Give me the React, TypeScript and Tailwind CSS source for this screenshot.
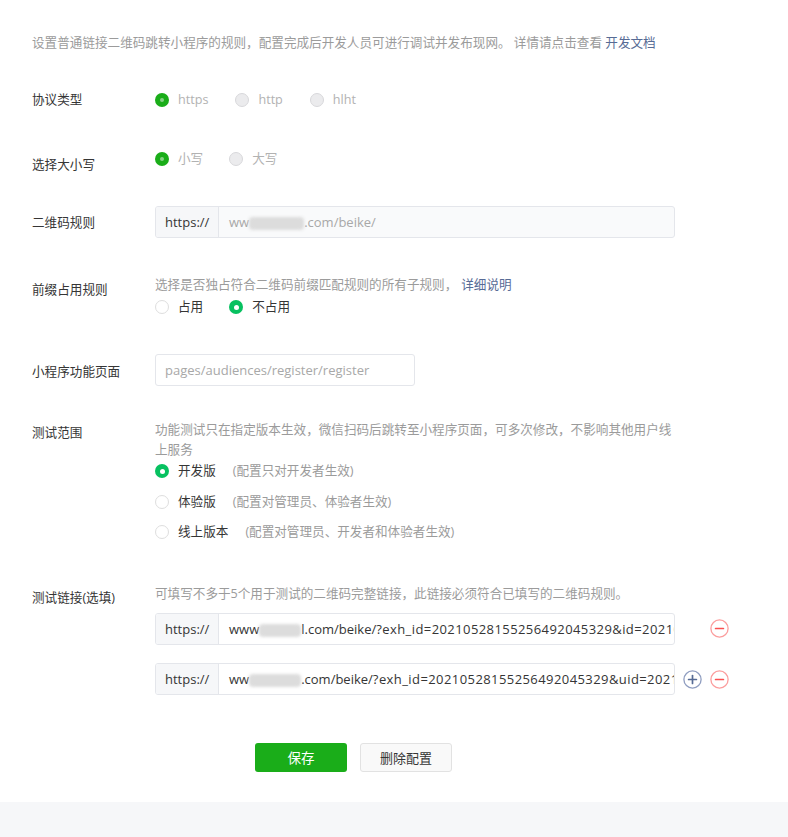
import React from "react";

type RadioProps = { checked?: boolean; disabled?: boolean };

function Radio({ checked, disabled }: RadioProps) {
  if (disabled && checked)
    return (
      <span className="w-[14px] h-[14px] rounded-full bg-[#1aad19] flex items-center justify-center shrink-0">
        <span className="w-[4px] h-[4px] rounded-full bg-[#86d086]" />
      </span>
    );
  if (disabled)
    return <span className="w-[14px] h-[14px] rounded-full bg-[#ebebed] border border-[#d8d8db] shrink-0" />;
  if (checked)
    return (
      <span className="w-[14px] h-[14px] rounded-full bg-[#07c160] flex items-center justify-center shrink-0">
        <span className="w-[5px] h-[5px] rounded-full bg-white" />
      </span>
    );
  return <span className="w-[14px] h-[14px] rounded-full bg-white border border-[#dedede] shrink-0" />;
}

function RadioItem({
  checked,
  disabled,
  children,
}: RadioProps & { children: React.ReactNode }) {
  return (
    <label className="flex items-center gap-[9px] h-[20px]">
      <Radio checked={checked} disabled={disabled} />
      <span className={disabled ? "text-[#b2b2b2]" : "text-[#353535]"}>{children}</span>
    </label>
  );
}

function Blur({ w }: { w: number }) {
  return (
    <span
      className="inline-block shrink-0 h-[13px] bg-[#dcdcdc] blur-[1.5px] align-middle rounded-sm"
      style={{ width: w }}
    />
  );
}

function MinusIcon() {
  return (
    <svg width="19" height="19" viewBox="0 0 19 19" className="shrink-0">
      <circle cx="9.5" cy="9.5" r="8.6" fill="none" stroke="#fb9d9d" strokeWidth="1.3" />
      <line x1="5.6" y1="9.5" x2="13.4" y2="9.5" stroke="#fa5151" strokeWidth="1.7" strokeLinecap="round" />
    </svg>
  );
}

function PlusIcon() {
  return (
    <svg width="19" height="19" viewBox="0 0 19 19" className="shrink-0">
      <circle cx="9.5" cy="9.5" r="8.6" fill="none" stroke="#8f9dc0" strokeWidth="1.3" />
      <line x1="5.6" y1="9.5" x2="13.4" y2="9.5" stroke="#576b95" strokeWidth="1.7" strokeLinecap="round" />
      <line x1="9.5" y1="5.6" x2="9.5" y2="13.4" stroke="#576b95" strokeWidth="1.7" strokeLinecap="round" />
    </svg>
  );
}

function PrefixInput({
  children,
  disabled,
}: {
  children: React.ReactNode;
  disabled?: boolean;
}) {
  return (
    <div
      className={`flex h-[32px] w-[520px] border border-[#e4e6eb] rounded-[3px] overflow-hidden text-[13px] ${
        disabled ? "bg-[#f9fafb]" : "bg-white"
      }`}
    >
      <div className="w-[63px] shrink-0 bg-[#f6f7f9] border-r border-[#e4e6eb] flex items-center pl-[9px] text-[#353535]">
        https://
      </div>
      <div
        className={`flex-1 min-w-0 flex items-center pl-[10px] overflow-hidden ${
          disabled ? "text-[#a8a8a8]" : "text-[#353535]"
        }`}
      >
        <span className="whitespace-nowrap">{children}</span>
      </div>
    </div>
  );
}

export default function App() {
  return (
    <div className="min-h-[837px] flex flex-col bg-[#f6f7f9] font-['Open_Sans','Noto_Sans_CJK_SC',sans-serif] text-[12.6px] leading-[20px] text-[#353535]">
      <div className="bg-white pl-[32px] pt-[33px] pb-[29.5px]">
        <p className="text-[#9b9b9b]">
          设置普通链接二维码跳转小程序的规则，配置完成后开发人员可进行调试并发布现网。 详情请点击查看{" "}
          <a className="text-[#576b95]">开发文档</a>
        </p>

        {/* 协议类型 */}
        <div className="mt-[37px] flex items-center h-[20px]">
          <div className="w-[123px] shrink-0">协议类型</div>
          <div className="flex items-center gap-[27px]">
            <RadioItem checked disabled>https</RadioItem>
            <RadioItem disabled>http</RadioItem>
            <RadioItem disabled>hlht</RadioItem>
          </div>
        </div>

        {/* 选择大小写 */}
        <div className="mt-[39px] flex items-start">
          <div className="w-[123px] shrink-0 pt-[6px]">选择大小写</div>
          <div className="flex items-center gap-[26px]">
            <RadioItem checked disabled>小写</RadioItem>
            <RadioItem disabled>大写</RadioItem>
          </div>
        </div>

        {/* 二维码规则 */}
        <div className="mt-[31px] flex items-center">
          <div className="w-[123px] shrink-0 pt-[2px]">二维码规则</div>
          <PrefixInput disabled>
            ww<Blur w={55} />.com/beike/
          </PrefixInput>
        </div>

        {/* 前缀占用规则 */}
        <div className="mt-[37px] flex items-start">
          <div className="w-[123px] shrink-0 pt-[5px]">前缀占用规则</div>
          <div>
            <p className="text-[#9b9b9b]">
              选择是否独占符合二维码前缀匹配规则的所有子规则，
              <a className="text-[#576b95] ml-[4px]">详细说明</a>
            </p>
            <div className="mt-[2px] flex items-center gap-[26px]">
              <RadioItem>占用</RadioItem>
              <RadioItem checked>不占用</RadioItem>
            </div>
          </div>
        </div>

        {/* 小程序功能页面 */}
        <div className="mt-[37px] flex items-start">
          <div className="w-[123px] shrink-0 mt-[8px]">小程序功能页面</div>
          <div className="h-[32px] w-[260px] border border-[#e4e6eb] rounded-[3px] flex items-center pl-[9px] text-[13px] text-[#a8a8a8]">
            pages/audiences/register/register
          </div>
        </div>

        {/* 测试范围 */}
        <div className="mt-[34px] flex items-start">
          <div className="w-[123px] shrink-0 pt-[3px]">测试范围</div>
          <div>
            <p className="w-[520px] text-[#9b9b9b]">
              功能测试只在指定版本生效，微信扫码后跳转至小程序页面，可多次修改，不影响其他用户线上服务
            </p>
            <div className="mt-[1px] flex flex-col gap-[10.5px]">
              <RadioItem checked>
                开发版<span className="ml-[17px] text-[#9b9b9b]">(配置只对开发者生效)</span>
              </RadioItem>
              <RadioItem>
                体验版<span className="ml-[17px] text-[#9b9b9b]">(配置对管理员、体验者生效)</span>
              </RadioItem>
              <RadioItem>
                线上版本<span className="ml-[17px] text-[#9b9b9b]">(配置对管理员、开发者和体验者生效)</span>
              </RadioItem>
            </div>
          </div>
        </div>

        {/* 测试链接 */}
        <div className="mt-[42px] flex items-start">
          <div className="w-[123px] shrink-0 pt-[4px]">测试链接(选填)</div>
          <div>
            <p className="text-[#9b9b9b]">
              可填写不多于5个用于测试的二维码完整链接，此链接必须符合已填写的二维码规则。
            </p>
            <div className="mt-[8.5px] flex flex-col gap-[18.5px]">
              <div className="flex items-center">
                <PrefixInput>
                  www<Blur w={42} />l.com/beike/
                  <span className="tracking-[0.42px]">?exh_id=20210528155256492045329&amp;id=20210528</span>
                </PrefixInput>
                <span className="w-[19px] ml-[8px]" />
                <span className="ml-[8px] flex">
                  <MinusIcon />
                </span>
              </div>
              <div className="flex items-center">
                <PrefixInput>
                  ww<Blur w={52} />.com/beike/
                  <span className="tracking-[0.42px]">?exh_id=20210528155256492045329&amp;uid=20210528</span>
                </PrefixInput>
                <span className="ml-[8px] flex">
                  <PlusIcon />
                </span>
                <span className="ml-[8px] flex">
                  <MinusIcon />
                </span>
              </div>
            </div>
          </div>
        </div>

        {/* Buttons */}
        <div className="mt-[48px] ml-[223px] flex items-center gap-[13px]">
          <button className="w-[92px] h-[29px] rounded-[3px] bg-[#1aad19] text-white text-[13.5px]">
            保存
          </button>
          <button className="w-[92px] h-[29px] rounded-[3px] bg-[#f9f9f9] border border-[#e2e2e2] text-[#353535] text-[13px]">
            删除配置
          </button>
        </div>
      </div>
      <div className="flex-1 bg-[#f6f7f9]" />
    </div>
  );
}
